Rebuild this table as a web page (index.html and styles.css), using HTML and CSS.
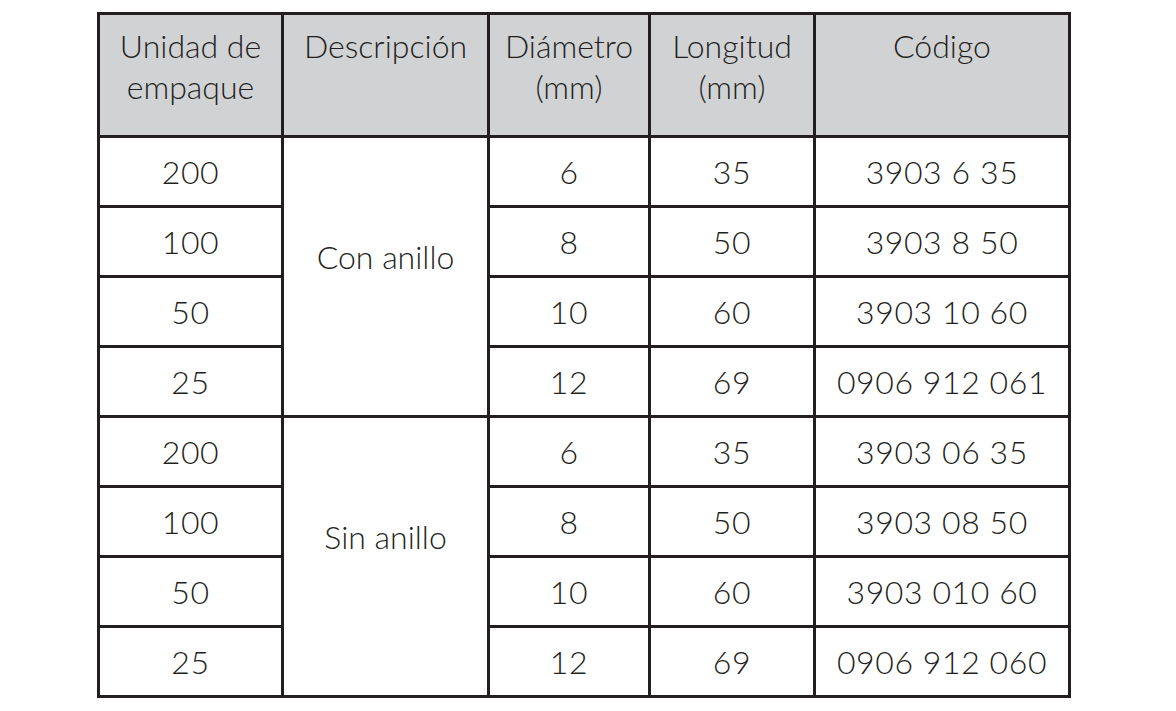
FILE: index.html
```html
<!DOCTYPE html>
<html lang="es">
<head>
<meta charset="utf-8">
<link rel="stylesheet" href="styles.css">
</head>
<body>
<table class="spec">
  <colgroup>
    <col class="c1"><col class="c2"><col class="c3"><col class="c4"><col class="c5">
  </colgroup>
  <thead>
    <tr>
      <th>Unidad de<br>empaque</th>
      <th>Descripción</th>
      <th>Diámetro<br>(mm)</th>
      <th>Longitud<br>(mm)</th>
      <th>Código</th>
    </tr>
  </thead>
  <tbody>
    <tr><td>200</td><td class="desc" rowspan="4">Con anillo</td><td>6</td><td>35</td><td>3903 6 35</td></tr>
    <tr><td>100</td><td>8</td><td>50</td><td>3903 8 50</td></tr>
    <tr><td>50</td><td>10</td><td>60</td><td>3903 10 60</td></tr>
    <tr><td>25</td><td>12</td><td>69</td><td>0906 912 061</td></tr>
    <tr><td>200</td><td class="desc" rowspan="4">Sin anillo</td><td>6</td><td>35</td><td>3903 06 35</td></tr>
    <tr><td>100</td><td>8</td><td>50</td><td>3903 08 50</td></tr>
    <tr><td>50</td><td>10</td><td>60</td><td>3903 010 60</td></tr>
    <tr><td>25</td><td>12</td><td>69</td><td>0906 912 060</td></tr>
  </tbody>
</table>
</body>
</html>
```
FILE: styles.css
```css
html, body {
  margin: 0;
  padding: 0;
  background: #ffffff;
}
body {
  font-family: "Lato", "Liberation Sans", sans-serif;
  color: #231f20;
}
.spec {
  margin: 12px 0 0 97px;
  border-collapse: collapse;
  table-layout: fixed;
  width: 974px;
}
.c1 { width: 184px; }
.c2 { width: 206px; }
.c3 { width: 161px; }
.c4 { width: 165px; }
.c5 { width: 255px; }
.spec th, .spec td {
  border: 3px solid #231f20;
  text-align: center;
  font-size: 32px;
  font-weight: 300;
  padding: 0;
}
.spec th {
  background: #d1d2d4;
  vertical-align: top;
  height: 123px;
  line-height: 41px;
  padding-top: 10px;
  box-sizing: border-box;
}
.spec td {
  height: 67px;
  vertical-align: middle;
  line-height: 36px;
  letter-spacing: 0.6px;
}
.spec td.desc {
  padding-bottom: 40px;
  letter-spacing: 0;
}
```
